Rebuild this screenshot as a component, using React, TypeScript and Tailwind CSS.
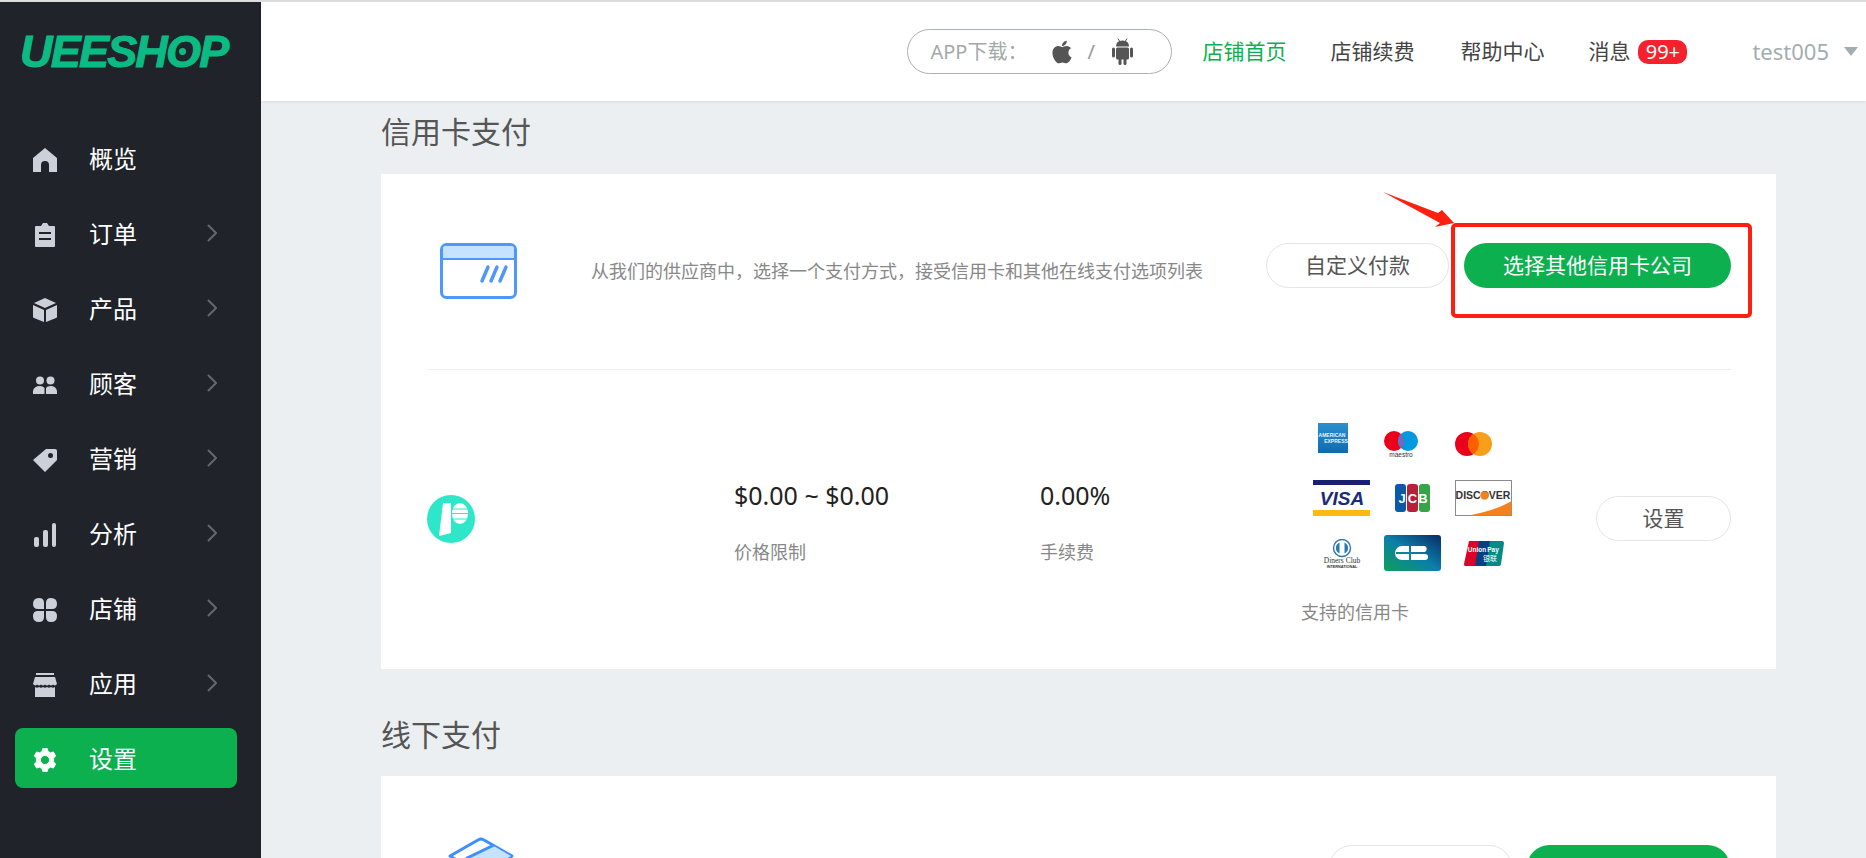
import { FaApple } from "react-icons/fa";

const font = { fontFamily: '"Noto Sans", "Noto Sans CJK SC", sans-serif' };

function HomeIcon() {
  return (
    <svg viewBox="0 0 24 24" className="w-6 h-6" fill="currentColor">
      <path d="M12 0 L24 10 V24 H16 V17 Q16 13 12 13 Q8 13 8 17 V24 H0 V10 Z" />
    </svg>
  );
}

function OrderIcon() {
  return (
    <svg viewBox="0 0 24 24" className="w-6 h-6" fill="currentColor">
      <path fillRule="evenodd" d="M8 3 L10 0 H14 L16 3 H21 Q22 3 22 4 V23 Q22 24 21 24 H3 Q2 24 2 23 V4 Q2 3 3 3 Z M6 9 V11 H18 V9 Z M6 15 V17 H18 V15 Z" />
    </svg>
  );
}

function BoxIcon() {
  return (
    <svg viewBox="0 0 24 24" className="w-6 h-6" fill="currentColor">
      <path d="M12 0 L23 5 L12 10 L1 5 Z" />
      <path d="M0 7 L11 12 V24 L1 20 Q0 19.5 0 19 Z" />
      <path d="M24 7 L13 12 V24 L23 20 Q24 19.5 24 19 Z" />
    </svg>
  );
}

function PeopleIcon() {
  return (
    <svg viewBox="0 0 24 18" className="w-6 h-[18px]" fill="currentColor">
      <circle cx="7" cy="4.5" r="4" />
      <circle cx="17.5" cy="4.5" r="4" />
      <path d="M0 18 V15 Q1 10 7 10 Q10 10 11.5 12 V18 Z" />
      <path d="M13 18 V12 Q14 10 17.5 10 Q23 10 24 15 V18 Z" />
    </svg>
  );
}

function TagIcon() {
  return (
    <svg viewBox="0 0 24 24" className="w-6 h-6" fill="currentColor">
      <path fillRule="evenodd" d="M13 1 H22 Q24 1 24 3 V12 L12 24 L0 12 Z M17.5 5 A2.5 2.5 0 1 0 17.5 10 A2.5 2.5 0 1 0 17.5 5 Z" />
    </svg>
  );
}

function BarsIcon() {
  return (
    <svg viewBox="0 0 24 24" className="w-6 h-6" fill="currentColor">
      <rect x="1" y="14" width="5" height="10" rx="2" />
      <rect x="10" y="7" width="5" height="17" rx="2" />
      <rect x="19" y="0" width="4" height="24" rx="2" />
    </svg>
  );
}

function ShopIcon() {
  return (
    <svg viewBox="0 0 24 24" className="w-6 h-6" fill="currentColor">
      <path d="M3 0 H21 V2 H3 Z" />
      <path d="M2 4 H22 L24 11 Q22 13.5 20 11.5 Q18 13.5 16 11.5 Q14 13.5 12 11.5 Q10 13.5 8 11.5 Q6 13.5 4 11.5 Q2 13.5 0 11 Z" />
      <path d="M2 14 Q4 15.5 6 14 Q8 15.5 10 14 Q12 15.5 14 14 Q16 15.5 18 14 Q20 15.5 22 14 V24 H2 Z" />
    </svg>
  );
}

function BlocksIcon() {
  return (
    <svg viewBox="0 0 24 24" className="w-6 h-6" fill="currentColor">
      <path d="M6 0 Q11 0 11 5 V11 H5 Q0 11 0 6 Q0 0 6 0 Z" />
      <path d="M18 0 Q13 0 13 5 V11 H19 Q24 11 24 6 Q24 0 18 0 Z" />
      <path d="M6 24 Q11 24 11 19 V13 H5 Q0 13 0 18 Q0 24 6 24 Z" />
      <path d="M18 24 Q13 24 13 19 V13 H19 Q24 13 24 18 Q24 24 18 24 Z" />
    </svg>
  );
}

function GearIcon() {
  return (
    <svg viewBox="0 0 24 24" className="w-6 h-6" fill="currentColor" stroke="currentColor" strokeWidth="0.8" strokeLinejoin="round">
      <path
        fillRule="evenodd"
        d="M9.7 0.5 H14.3 L15 3.4 L17.5 4.8 L20.4 3.9 L22.8 8 L20.6 10.1 V13.9 L22.8 16 L20.4 20.1 L17.5 19.2 L15 20.6 L14.3 23.5 H9.7 L9 20.6 L6.5 19.2 L3.6 20.1 L1.2 16 L3.4 13.9 V10.1 L1.2 8 L3.6 3.9 L6.5 4.8 L9 3.4 Z M12 7.5 A4.5 4.5 0 1 0 12 16.5 A4.5 4.5 0 1 0 12 7.5 Z"
      />
    </svg>
  );
}

function AndroidIcon() {
  return (
    <svg viewBox="0 0 21 27" className="w-[21px] h-[27px]" fill="#555">
      <path d="M6 0.5 L8 4 M15 0.5 L13 4" stroke="#555" strokeWidth="1" />
      <path d="M4 8.5 Q4 2.5 10.5 2.5 Q17 2.5 17 8.5 Z" />
      <rect x="4" y="9.5" width="13" height="12" rx="1.5" />
      <rect x="0" y="9.5" width="3" height="10" rx="1.5" />
      <rect x="18" y="9.5" width="3" height="10" rx="1.5" />
      <rect x="6.5" y="20" width="3" height="7" rx="1.5" />
      <rect x="11.5" y="20" width="3" height="7" rx="1.5" />
    </svg>
  );
}

function Chevron() {
  return (
    <svg viewBox="0 0 10 18" className="w-[10px] h-[18px]" fill="none" stroke="#64676c" strokeWidth="2">
      <path d="M1 1 L9 9 L1 17" />
    </svg>
  );
}

const navItems = [
  { label: "概览", icon: <HomeIcon />, arrow: false },
  { label: "订单", icon: <OrderIcon />, arrow: true },
  { label: "产品", icon: <BoxIcon />, arrow: true },
  { label: "顾客", icon: <PeopleIcon />, arrow: true },
  { label: "营销", icon: <TagIcon />, arrow: true },
  { label: "分析", icon: <BarsIcon />, arrow: true },
  { label: "店铺", icon: <BlocksIcon />, arrow: true },
  { label: "应用", icon: <ShopIcon />, arrow: true },
  { label: "设置", icon: <GearIcon />, arrow: false, active: true },
];

function Sidebar() {
  return (
    <aside className="relative w-[261px] shrink-0 bg-[#20232a] h-full">
      <div className="h-[126px] pl-[20px] pt-[22px]">
        <span
          className="text-[#0cba84] text-[45px] leading-[56px] font-bold italic tracking-[-1.8px] [-webkit-text-stroke:1px_#0cba84]"
          style={{ fontFamily: '"Liberation Sans", sans-serif' }}
        >
          UEESHOP
        </span>
      </div>
      <span className="absolute left-[179px] top-[46px] w-[7px] h-[7px] rounded-full bg-[#0cba84]" />
      <nav className="pl-[15px] pr-[24px] flex flex-col gap-[15px]">
        {navItems.map((item) => (
          <div
            key={item.label}
            className={`h-[60px] rounded-lg flex items-center pl-[18px] ${item.active ? "bg-[#0cb04f] text-white" : "text-[#ccd1d9]"}`}
          >
            <span className="w-[56px] flex items-center mt-[4px]">{item.icon}</span>
            <span className="text-white text-2xl leading-none mt-[2px]">{item.label}</span>
            {item.arrow && (
              <span className="ml-auto mr-[20px] flex">
                <Chevron />
              </span>
            )}
          </div>
        ))}
      </nav>
    </aside>
  );
}

function Header() {
  return (
    <header className="h-[99px] shrink-0 bg-white shadow-[0_1px_3px_rgba(0,0,0,0.08)] flex items-center justify-end relative z-10">
      <div className="w-[265px] h-[45px] rounded-full border border-[#aab0b3] flex items-center pl-[22px] text-[#a3a8a8] text-xl">
        <span>APP下载：</span>
        <FaApple className="ml-[25px] text-[#555] w-[20px] h-[26px]" />
        <span className="ml-[15px] text-[#999]">/</span>
        <span className="ml-[17px] flex">
          <AndroidIcon />
        </span>
      </div>
      <a className="ml-[30px] text-[#0cb04f] text-[21px]">店铺首页</a>
      <a className="ml-[44px] text-[#444] text-[21px]">店铺续费</a>
      <a className="ml-[46px] text-[#444] text-[21px]">帮助中心</a>
      <a className="ml-[44px] text-[#444] text-[21px]">消息</a>
      <span className="ml-[8px] h-6 w-[49px] text-center rounded-[10px] bg-[#f5222d] text-white text-xl leading-6">99+</span>
      <span className="ml-[65px] text-[#a3adb0] text-[22px]">test005</span>
      <span className="ml-[15px] mr-[8px] border-x-[7px] border-t-[9px] border-x-transparent border-t-[#a3adb0]" />
    </header>
  );
}

function CreditCardIcon() {
  return (
    <svg viewBox="0 0 77 56" className="w-[77px] h-[56px]">
      <rect x="1.5" y="1.5" width="74" height="53" rx="5" fill="#fff" stroke="#4f97ff" strokeWidth="3" />
      <path d="M3 15 V6 Q3 3 6 3 H71 Q74 3 74 6 V15 Z" fill="#c5e3ff" />
      <path d="M2 16 H75" stroke="#4f97ff" strokeWidth="2" />
      <path d="M42 38 L48 24 M51 38 L57 24 M60 38 L66 24" stroke="#4f97ff" strokeWidth="3.5" strokeLinecap="round" />
    </svg>
  );
}

function PLogo() {
  return (
    <svg viewBox="0 0 48 48" className="w-12 h-12">
      <circle cx="24" cy="24" r="24" fill="#2ee6c8" />
      <path d="M16 8 H24 V38 L12 41 Z" fill="#fff" />
      <ellipse cx="33" cy="18.5" rx="8" ry="10.5" fill="#fff" />
      <path d="M25 14 H41 M25 18.5 H41 M25 24 H41" stroke="#2ee6c8" strokeWidth="1.2" />
    </svg>
  );
}

function Amex() {
  return (
    <svg viewBox="0 0 35 30" className="w-[35px] h-[30px]">
      <defs>
        <linearGradient id="amex" x1="0" y1="0" x2="0" y2="1">
          <stop offset="0" stopColor="#2a8fd0" />
          <stop offset="1" stopColor="#0e6cae" />
        </linearGradient>
      </defs>
      <rect x="5" width="30" height="30" fill="url(#amex)" />
      <text x="19" y="13.5" textAnchor="middle" fontSize="5" fontWeight="700" fill="#e6f2fa" fontFamily="Liberation Sans">AMERICAN</text>
      <text x="23" y="20" textAnchor="middle" fontSize="5" fontWeight="700" fill="#e6f2fa" fontFamily="Liberation Sans">EXPRESS</text>
    </svg>
  );
}

function Maestro() {
  return (
    <svg viewBox="0 0 34 28" className="w-[34px] h-7">
      <circle cx="10" cy="10" r="10" fill="#eb001b" />
      <circle cx="24" cy="10" r="10" fill="#0099df" />
      <path d="M17 2.7 A10 10 0 0 1 17 17.3 A10 10 0 0 1 17 2.7 Z" fill="#6c6bbd" />
      <text x="17" y="26" textAnchor="middle" fontSize="6.5" fill="#333" fontFamily="Liberation Sans">maestro</text>
    </svg>
  );
}

function Mastercard() {
  return (
    <svg viewBox="0 0 37 24" className="w-[37px] h-6">
      <circle cx="12" cy="12" r="12" fill="#eb001b" />
      <circle cx="25" cy="12" r="12" fill="#f79e1b" />
      <path d="M18.5 2 A12 12 0 0 1 18.5 22 A12 12 0 0 1 18.5 2 Z" fill="#ff5f00" />
    </svg>
  );
}

function Visa() {
  return (
    <svg viewBox="0 0 57 36" className="w-[57px] h-9">
      <rect width="57" height="36" fill="#fff" />
      <rect width="57" height="5" fill="#1a1f71" />
      <rect y="30" width="57" height="6" fill="#fdb913" />
      <text x="29" y="25" textAnchor="middle" fontSize="19" fontWeight="700" fontStyle="italic" fill="#1a2a78" fontFamily="Liberation Sans">VISA</text>
    </svg>
  );
}

function Jcb() {
  return (
    <svg viewBox="0 0 35 28" className="w-[35px] h-7">
      <rect x="0" width="11" height="28" rx="3" fill="#0b5aa8" />
      <rect x="12" width="11" height="28" rx="3" fill="#b81f3a" />
      <rect x="24" width="11" height="28" rx="3" fill="#34a548" />
      <text x="7" y="19" textAnchor="middle" fontSize="13" fontWeight="700" fill="#fff" fontFamily="Liberation Sans">J</text>
      <text x="17.5" y="19" textAnchor="middle" fontSize="13" fontWeight="700" fill="#fff" fontFamily="Liberation Sans">C</text>
      <text x="28" y="19" textAnchor="middle" fontSize="13" fontWeight="700" fill="#fff" fontFamily="Liberation Sans">B</text>
    </svg>
  );
}

function Discover() {
  return (
    <svg viewBox="0 0 57 36" className="w-[57px] h-9">
      <rect x="0.5" y="0.5" width="56" height="35" fill="#fff" stroke="#8a8a8a" />
      <path d="M14 35.5 Q42 30 56.5 21 V35.5 Z" fill="#f48120" />
      <text x="28" y="19" textAnchor="middle" fontSize="10.5" fontWeight="700" fill="#333" fontFamily="Liberation Sans">DISCOVER</text>
      <circle cx="29.5" cy="15.5" r="4.2" fill="#f48120" />
    </svg>
  );
}

function Diners() {
  return (
    <svg viewBox="0 0 40 29" className="w-10 h-[29px]">
      <circle cx="20" cy="9" r="8.5" fill="#fff" stroke="#2b78b8" strokeWidth="1.4" />
      <path d="M17.5 3.5 A6 6 0 0 0 17.5 14.5 Z M22.5 3.5 A6 6 0 0 1 22.5 14.5 Z" fill="#2b78b8" />
      <text x="20" y="24" textAnchor="middle" fontSize="7.5" fill="#333" fontFamily="Liberation Serif">Diners Club</text>
      <text x="20" y="28.5" textAnchor="middle" fontSize="3.8" fontWeight="700" fill="#333" fontFamily="Liberation Sans">INTERNATIONAL</text>
    </svg>
  );
}

function Cb() {
  return (
    <svg viewBox="0 0 57 36" className="w-[57px] h-9">
      <defs>
        <linearGradient id="cb" x1="0" y1="1" x2="1" y2="0">
          <stop offset="0" stopColor="#0da05a" />
          <stop offset="0.5" stopColor="#0b7fa8" />
          <stop offset="1" stopColor="#0a2a66" />
        </linearGradient>
      </defs>
      <rect width="57" height="36" rx="3" fill="url(#cb)" />
      <path d="M25 11 H18 A7 7 0 0 0 18 25 H25 V19 H12 V17 H25 Z" fill="#fff" />
      <path d="M27 11 H41 A3.5 3.5 0 0 1 41 17 H27 Z M27 19 H41 A3 3 0 0 1 41 25 H27 Z" fill="#fff" />
    </svg>
  );
}

function UnionPay() {
  return (
    <svg viewBox="0 0 40 25" className="w-10 h-[25px]">
      <path d="M5 0 H17 L13 25 H1 Q0 25 0 23 Z" fill="#dd0228" />
      <path d="M15 0 H28 L24 25 H11 Z" fill="#02407f" />
      <path d="M26 0 H38 Q40 0 40 2 L37 23 Q37 25 35 25 H22 Z" fill="#018b87" />
      <text x="13" y="11" textAnchor="middle" fontSize="6.5" fontWeight="700" fill="#fff" fontFamily="Liberation Sans">Union</text>
      <text x="29" y="11" textAnchor="middle" fontSize="6.5" fontWeight="700" fill="#fff" fontFamily="Liberation Sans">Pay</text>
      <text x="26" y="20" textAnchor="middle" fontSize="7" fill="#fff" fontFamily="Noto Sans CJK SC">银联</text>
    </svg>
  );
}

const cardLogos = [
  { key: "amex", node: <Amex />, cls: "justify-start items-start -mt-[2px]" },
  { key: "maestro", node: <Maestro />, cls: "justify-start items-start pt-[6px]" },
  { key: "mc", node: <Mastercard />, cls: "justify-start items-start pt-[7px]" },
  { key: "visa", node: <Visa />, cls: "justify-center items-center" },
  { key: "jcb", node: <Jcb />, cls: "justify-center items-center" },
  { key: "discover", node: <Discover />, cls: "justify-center items-center" },
  { key: "diners", node: <Diners />, cls: "justify-center items-center" },
  { key: "cb", node: <Cb />, cls: "justify-center items-center" },
  { key: "unionpay", node: <UnionPay />, cls: "justify-center items-center" },
];

function OutlineButton({ children, className }: { children: string; className: string }) {
  return (
    <button className={`h-[45px] rounded-full border border-[#e5e5e5] bg-white text-[#555] text-[21px] leading-none ${className}`}>
      {children}
    </button>
  );
}

function CreditCardSection() {
  return (
    <section>
      <h2 className="text-[30px] leading-[50px] text-[#555] font-normal mb-[17px]">信用卡支付</h2>
      <div className="bg-white pl-[46px] pr-[45px] h-[495px]">
        <div className="h-[196px] border-b border-[#eeeeee] flex items-center">
          <div className="ml-[13px] mb-[1px]">
            <CreditCardIcon />
          </div>
          <p className="ml-[74px] mb-[1px] text-lg text-[#888]">从我们的供应商中，选择一个支付方式，接受信用卡和其他在线支付选项列表</p>
          <div className="ml-auto mb-[12px] flex gap-[15px]">
            <OutlineButton className="w-[183px]">自定义付款</OutlineButton>
            <button className="h-[45px] w-[267px] rounded-full bg-[#0cb04f] text-white text-[21px] leading-none">选择其他信用卡公司</button>
          </div>
        </div>
        <div className="flex items-start">
          <div className="w-[307px] pt-[125px]">
            <PLogo />
          </div>
          <div className="w-[306px] pt-[106px]">
            <div className="text-[25px] leading-[38px] text-[#222]">$0.00 ~ $0.00</div>
            <div className="text-lg leading-6 text-[#888] mt-[26px]">价格限制</div>
          </div>
          <div className="w-[261px] pt-[106px]">
            <div className="text-[25px] leading-[38px] text-[#222]">0.00%</div>
            <div className="text-lg leading-6 text-[#888] mt-[26px]">手续费</div>
          </div>
          <div className="pt-[55px]">
            <div className="ml-[12px] grid grid-cols-[57px_57px_57px] auto-rows-[36px] gap-x-[14px] gap-y-[19px]">
              {cardLogos.map((logo) => (
                <div key={logo.key} className={`flex ${logo.cls}`}>
                  {logo.node}
                </div>
              ))}
            </div>
            <div className="text-lg leading-6 text-[#888] mt-[29px]">支持的信用卡</div>
          </div>
          <OutlineButton className="ml-auto mt-[126px] w-[135px]">设置</OutlineButton>
        </div>
      </div>
    </section>
  );
}

function OfflineSection() {
  return (
    <section className="mt-[41px]">
      <h2 className="text-[30px] leading-[50px] text-[#555] font-normal mb-[16px]">线下支付</h2>
      <div className="bg-white pl-[46px] pr-[45px] h-[195px] flex items-start">
        <svg viewBox="0 0 66 40" className="ml-[21px] mt-[61px] w-[66px] h-10 shrink-0">
          <path d="M33 2 Q34 2 36 3 L64 19 L33 38 L2 19 L30 3 Q32 2 33 2 Z" fill="#fff" stroke="#3d8eff" strokeWidth="3" strokeLinejoin="round" />
          <path d="M45 8.5 L63 19 L33 36 L20 22 Z" fill="#c5e3ff" />
          <path d="M45 8.5 L19 21" stroke="#3d8eff" strokeWidth="3" strokeLinecap="round" />
        </svg>
        <div className="ml-auto mt-[69px] flex gap-[15px] mr-[1px]">
          <button className="h-[45px] w-[183px] rounded-full border border-[#e5e5e5] bg-white" />
          <button className="h-[45px] w-[203px] rounded-full bg-[#0cb04f]" />
        </div>
      </div>
    </section>
  );
}

// red marks somebody drew over the screenshot
function Annotation() {
  return (
    <>
      <div className="absolute left-[1451px] top-[221px] w-[301px] h-[95px] border-[4px] border-[#ff1f10] rounded-[5px]" />
      <svg className="absolute left-[1375px] top-[183px] w-[90px] h-[50px]" viewBox="1375 185 90 50">
        <path d="M1383 192 L1438 213 L1442 210 L1454 223 L1435 227 L1440 223 Z" fill="#ff1f10" />
      </svg>
    </>
  );
}

export default function App() {
  return (
    <div className="relative h-[858px] w-full overflow-hidden bg-[#ebeff2] border-t-2 border-[#dddddd]" style={font}>
      <div className="flex h-full">
        <Sidebar />
        <div className="flex-1 min-w-0 flex flex-col">
          <Header />
          <main className="flex-1 pl-[120px] pr-[90px] pt-[6px] overflow-hidden">
            <CreditCardSection />
            <OfflineSection />
          </main>
        </div>
      </div>
      <Annotation />
    </div>
  );
}
